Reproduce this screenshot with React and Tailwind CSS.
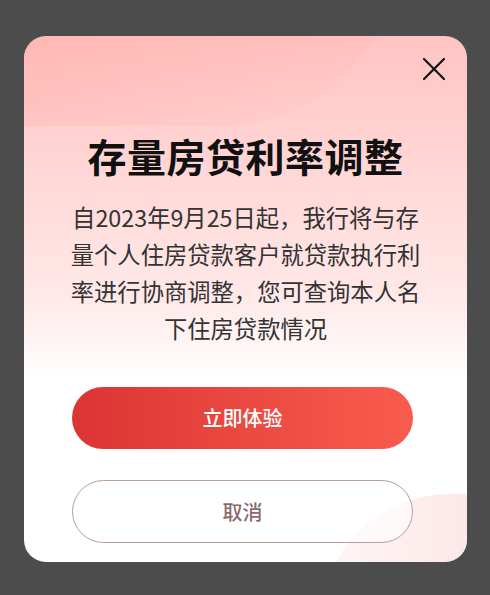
const font = { fontFamily: '"Noto Sans CJK SC", "Noto Sans", sans-serif' };

const CloseIcon = () => (
  <svg width="24" height="24" viewBox="0 0 24 24" fill="none" stroke="#111" strokeWidth="2.2" strokeLinecap="round">
    <path d="M2 2L22 22M22 2L2 22" />
  </svg>
);

const RateNoticeDialog = ({ onConfirm, onClose }) => {
  return (
    <div className="relative w-[443px] h-[526px] rounded-[22px] overflow-hidden bg-gradient-to-b from-[#ffc4c2] via-[#ffe9e9] via-50% to-white to-65%">
      {/* soft decorative blobs */}
      <div className="absolute -left-[190px] -top-[250px] w-[560px] h-[340px] rounded-full bg-gradient-to-br from-[#ffa39c]/80 to-[#ffc9c6]/0" />
      <div className="absolute left-[296px] top-[458px] w-[330px] h-[260px] rounded-full bg-gradient-to-r from-[#fdeaea]/40 to-[#fbd6d6]" />

      <button
        type="button"
        onClick={onClose}
        className="absolute right-[21px] top-[21px] w-[24px] h-[24px] flex items-center justify-center"
      >
        <CloseIcon />
      </button>

      <div className="relative flex flex-col items-center pt-[93px] px-[48px] pb-[20px]">
        <h2 className="text-[39px] leading-[52px] font-bold text-[#111] tracking-[0.5px]">
          存量房贷利率调整
        </h2>
        <p className="mt-[18px] text-[23.3px] leading-[37px] text-[#333] text-center whitespace-nowrap">
          自2023年9月25日起，我行将与存
          <br />
          量个人住房贷款客户就贷款执行利
          <br />
          率进行协商调整，您可查询本人名
          <br />
          下住房贷款情况
        </p>
        <button
          type="button"
          onClick={onConfirm}
          className="self-start mt-[40px] w-[341px] h-[62px] rounded-full bg-gradient-to-r from-[#dc3333] to-[#f85c4e] text-white text-[20px] font-medium"
        >
          立即体验
        </button>
        <button
          type="button"
          onClick={onClose}
          className="self-start mt-[31px] w-[341px] h-[63px] rounded-full border-[1.5px] border-[#b89ca1] bg-white/60 text-[#8b6a6f] text-[20px] font-medium"
        >
          取消
        </button>
      </div>
    </div>
  );
};

export default function App() {
  return (
    <div className="w-[490px] h-[595px] bg-[#4b4c4b] pt-[36px] pl-[24px]" style={font}>
      <RateNoticeDialog onConfirm={() => {}} onClose={() => {}} />
    </div>
  );
}
